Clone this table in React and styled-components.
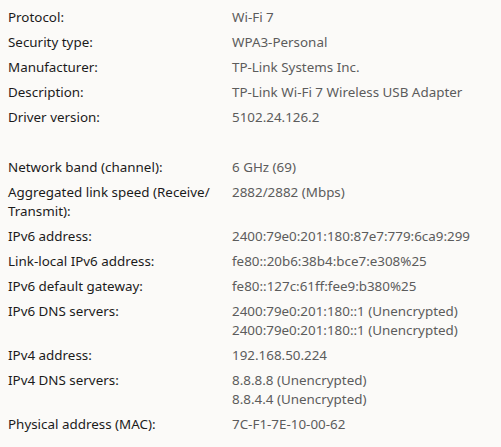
import React from 'react'
import styled, { createGlobalStyle } from 'styled-components'

const GlobalStyle = createGlobalStyle`
  html, body {
    margin: 0;
    padding: 0;
    background: #fbfaf8;
  }
  body {
    font-family: 'Segoe UI', 'Noto Sans', 'Open Sans', sans-serif;
    -webkit-font-smoothing: antialiased;
  }
`

const Page = styled.div`
  display: flex;
  flex-direction: column;
  gap: 31px;
  padding: 8px 8px 0 8px;
  width: 501px;
  height: 447px;
  box-sizing: border-box;
  overflow: hidden;
`

const Section = styled.dl`
  display: grid;
  grid-template-columns: 214px 1fr;
  column-gap: 10px;
  row-gap: 6px;
  margin: 0;
  font-size: 13.4px;
  line-height: 19px;
`

const Label = styled.dt`
  margin: 0;
  color: #1b1b1b;
`

const Value = styled.dd`
  margin: 0;
  color: #5c5c5c;
  display: flex;
  flex-direction: column;
`

const general = [
  ['Protocol:', ['Wi-Fi 7']],
  ['Security type:', ['WPA3-Personal']],
  ['Manufacturer:', ['TP-Link Systems Inc.']],
  ['Description:', ['TP-Link Wi-Fi 7 Wireless USB Adapter']],
  ['Driver version:', ['5102.24.126.2']],
]

const network = [
  ['Network band (channel):', ['6 GHz (69)']],
  ['Aggregated link speed (Receive/ Transmit):', ['2882/2882 (Mbps)']],
  ['IPv6 address:', ['2400:79e0:201:180:87e7:779:6ca9:299']],
  ['Link-local IPv6 address:', ['fe80::20b6:38b4:bce7:e308%25']],
  ['IPv6 default gateway:', ['fe80::127c:61ff:fee9:b380%25']],
  ['IPv6 DNS servers:', ['2400:79e0:201:180::1 (Unencrypted)', '2400:79e0:201:180::1 (Unencrypted)']],
  ['IPv4 address:', ['192.168.50.224']],
  ['IPv4 DNS servers:', ['8.8.8.8 (Unencrypted)', '8.8.4.4 (Unencrypted)']],
  ['Physical address (MAC):', ['7C-F1-7E-10-00-62']],
]

function Rows({ items }) {
  return (
    <Section>
      {items.map(([label, values]) => (
        <React.Fragment key={label}>
          <Label>{label}</Label>
          <Value>
            {values.map((v, i) => (
              <span key={i}>{v}</span>
            ))}
          </Value>
        </React.Fragment>
      ))}
    </Section>
  )
}

export default function App() {
  return (
    <>
      <GlobalStyle />
      <Page>
        <Rows items={general} />
        <Rows items={network} />
      </Page>
    </>
  )
}
